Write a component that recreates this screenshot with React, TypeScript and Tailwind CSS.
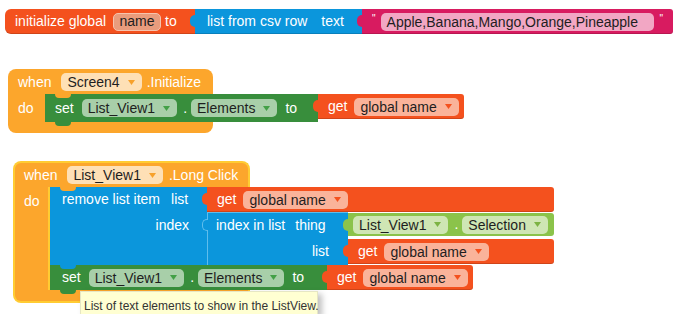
import clsx from "clsx";
import type { ReactNode } from "react";

type Tint = "var" | "event" | "set" | "getter" | "text";

const fieldBg: Record<Tint, string> = {
  var: "bg-[#fab39a]",
  event: "bg-[#fee0b6]",
  set: "bg-[#a8cfa9]",
  getter: "bg-[#cfe6b4]",
  text: "bg-[#f2a7c4]",
};

const arrowFill: Record<Tint, string> = {
  var: "#f4511e",
  event: "#f7a12b",
  set: "#43a047",
  getter: "#7cb342",
  text: "#d81b60",
};

const Arrow = ({ tint }: { tint: Tint }) => (
  <svg width="7" height="5" viewBox="0 0 7 5" className="ml-[8px] mr-[1px]">
    <path d="M0 0h7L3.5 5z" fill={arrowFill[tint]} />
  </svg>
);

const Field = ({
  tint,
  drop = false,
  className,
  children,
}: {
  tint: Tint;
  drop?: boolean;
  className?: string;
  children: ReactNode;
}) => (
  <span
    className={clsx(
      "flex h-[18px] items-center rounded-[5px] px-[6px] leading-none text-[#1e1e1e]",
      fieldBg[tint],
      className
    )}
  >
    {children}
    {drop && <Arrow tint={tint} />}
  </span>
);

// puzzle tab of a value block, sticking into the parent's socket
const Tab = ({ className }: { className: string }) => (
  <span className={clsx("absolute -left-[5px] top-[6px] h-[12px] w-[6px] rounded-l-[5px]", className)} />
);

// statement notch (colour of the block above) and bottom tab
const Notch = ({ className }: { className: string }) => (
  <span className={clsx("absolute left-[10px] top-0 h-[4px] w-[16px] rounded-b-[6px]", className)} />
);
const NextTab = ({ className }: { className: string }) => (
  <span className={clsx("absolute -bottom-[4px] left-[10px] z-10 h-[4px] w-[16px] rounded-b-[6px]", className)} />
);

const GetGlobal = ({ className }: { className?: string }) => (
  <div
    className={clsx(
      "relative flex h-[25px] items-center rounded-r-[3px] bg-[#f4511e] pl-[10px] pr-[5px] text-white shadow-[inset_0_-1px_0_rgba(0,0,0,0.15)]",
      className
    )}
  >
    <Tab className="bg-[#f4511e]" />
    <span>get</span>
    <Field tint="var" drop className="ml-[7px]">
      global name
    </Field>
  </div>
);

const SetElements = ({ className, notch, height }: { className: string; notch: string; height: string }) => (
  <div className="flex items-start">
    <div className={clsx("relative flex items-center bg-[#388e3c] text-white", height, className)}>
      <Notch className={notch} />
      <NextTab className="bg-[#388e3c]" />
      <span>set</span>
      <Field tint="set" drop className="ml-[8px]">
        List_View1
      </Field>
      <span className="ml-[6px]">.</span>
      <Field tint="set" drop className="ml-[4px]">
        Elements
      </Field>
      <span className="ml-[8px]">to</span>
    </div>
    <GetGlobal />
  </div>
);

const InitGlobal = () => (
  <div className="ml-[5px] mt-[9px] flex h-[25px]">
    <div className="flex w-[190px] items-center rounded-l-[6px] bg-[#f4511e] pl-[10px] text-white shadow-[inset_0_-1px_0_rgba(0,0,0,0.15)]">
      <span>initialize global</span>
      <span className="ml-[7px] flex h-[18px] w-[48px] items-center justify-center rounded-[5px] border border-[#f6c3ad] bg-[#e99c7d] text-[#1e1e1e]">
        name
      </span>
      <span className="ml-[4px]">to</span>
    </div>
    <div className="relative flex w-[167px] items-center bg-[#0b96dc] pl-[12px] text-white shadow-[inset_0_-1px_0_rgba(0,0,0,0.15)]">
      <Tab className="bg-[#0b96dc]" />
      <span>list from csv row</span>
      <span className="ml-[14px]">text</span>
    </div>
    <div className="relative flex w-[311px] items-center rounded-r-[3px] bg-[#d81b60] pl-[10px] text-white shadow-[inset_0_-1px_0_rgba(0,0,0,0.15)]">
      <Tab className="bg-[#d81b60]" />
      <span className="mb-[6px] text-[10px] leading-none">"</span>
      <Field tint="text" className="ml-[5px] w-[273px]">
        Apple,Banana,Mango,Orange,Pineapple
      </Field>
      <span className="mb-[6px] ml-[6px] text-[10px] leading-none">"</span>
    </div>
  </div>
);

const ScreenInit = () => (
  <div className="ml-[8px] mt-[35px] flex flex-col">
    <div className="flex h-[25px] w-[205px] items-center rounded-t-[8px] bg-[#fca62c] pl-[10px] pt-[1px] text-white">
      <span>when</span>
      <Field tint="event" drop className="ml-[10px]">
        Screen4
      </Field>
      <span className="ml-[5px]">.Initialize</span>
    </div>
    <div className="flex">
      <div className="w-[37px] bg-[#fca62c] pl-[10px] pt-[4px] text-white">do</div>
      <SetElements className="w-[273px] pl-[10px]" height="h-[28px]" notch="bg-[#fca62c]" />
    </div>
    <div className="h-[11px] w-[205px] rounded-b-[8px] bg-[#fca62c]" />
  </div>
);

const LongClick = () => (
  <div className="ml-[13px] mt-[28px] flex flex-col">
    <div className="flex h-[26px] w-[237px] items-center rounded-t-[8px] border-2 border-b-0 border-[#ffcc33] bg-[#fca62c] pl-[9px] text-white">
      <span>when</span>
      <Field tint="event" drop className="ml-[10px]">
        List_View1
      </Field>
      <span className="ml-[6px]">.Long Click</span>
    </div>
    <div className="flex">
      <div className="w-[37px] border-x-2 border-[#ffcc33] bg-[#fca62c] pl-[9px] pt-[4px] text-white">do</div>
      <div className="flex flex-col">
        {/* remove list item */}
        <div className="flex">
          <div className="relative flex h-[78px] w-[157px] flex-col bg-[#0b96dc] text-white">
            <Notch className="bg-[#fca62c]" />
            <div className="flex h-[25px] items-center pl-[12px]">
              <span>remove list item</span>
              <span className="ml-[11px]">list</span>
            </div>
            <div className="flex h-[26px] items-center justify-end pr-[18px]">index</div>
          </div>
          <div className="flex flex-col">
            <GetGlobal />
            <div className="flex">
              <div className="relative flex h-[53px] w-[141px] flex-col border-l border-t border-[#5fbdec] bg-[#0b96dc] text-white">
                <span className="absolute -left-[6px] top-[6px] h-[12px] w-[6px] rounded-l-[5px] border border-r-0 border-[#5fbdec] bg-[#0b96dc]" />
                <div className="flex h-[25px] items-center pl-[8px]">
                  <span>index in list</span>
                  <span className="ml-[10px]">thing</span>
                </div>
                <div className="flex h-[26px] items-center justify-end pr-[19px]">list</div>
              </div>
              <div className="flex flex-col">
                <div className="relative mt-[1px] flex h-[23px] items-center rounded-r-[3px] bg-[#8bc34a] pl-[5px] pr-[6px] text-white">
                  <Tab className="bg-[#8bc34a]" />
                  <Field tint="getter" drop>
                    List_View1
                  </Field>
                  <span className="ml-[6px]">.</span>
                  <Field tint="getter" drop className="ml-[4px]">
                    Selection
                  </Field>
                </div>
                <GetGlobal className="mt-[3px] h-[24px]" />
              </div>
            </div>
          </div>
        </div>
        <SetElements className="w-[277px] pl-[12px]" height="h-[25px]" notch="bg-[#0b96dc]" />
      </div>
    </div>
    <div className="h-[13px] w-[237px] rounded-b-[8px] border-2 border-t-0 border-[#ffcc33] bg-[#fca62c]" />
  </div>
);

export default function App() {
  return (
    <div className="relative flex h-[314px] w-[690px] flex-col items-start overflow-hidden bg-white font-['Liberation_Sans',Arial,sans-serif] text-[14px]">
      <InitGlobal />
      <ScreenInit />
      <LongClick />
      {/* tooltip */}
      <div className="absolute left-[80px] top-[291px] h-[24px] w-[238px] whitespace-nowrap border border-[#e6e6c4] bg-[#ffffd2] pl-[3px] pt-[7px] text-[12px] leading-[14px] text-[#333] shadow-[4px_3px_6px_rgba(0,0,0,0.25)]">
        List of text elements to show in the ListView.
      </div>
    </div>
  );
}
